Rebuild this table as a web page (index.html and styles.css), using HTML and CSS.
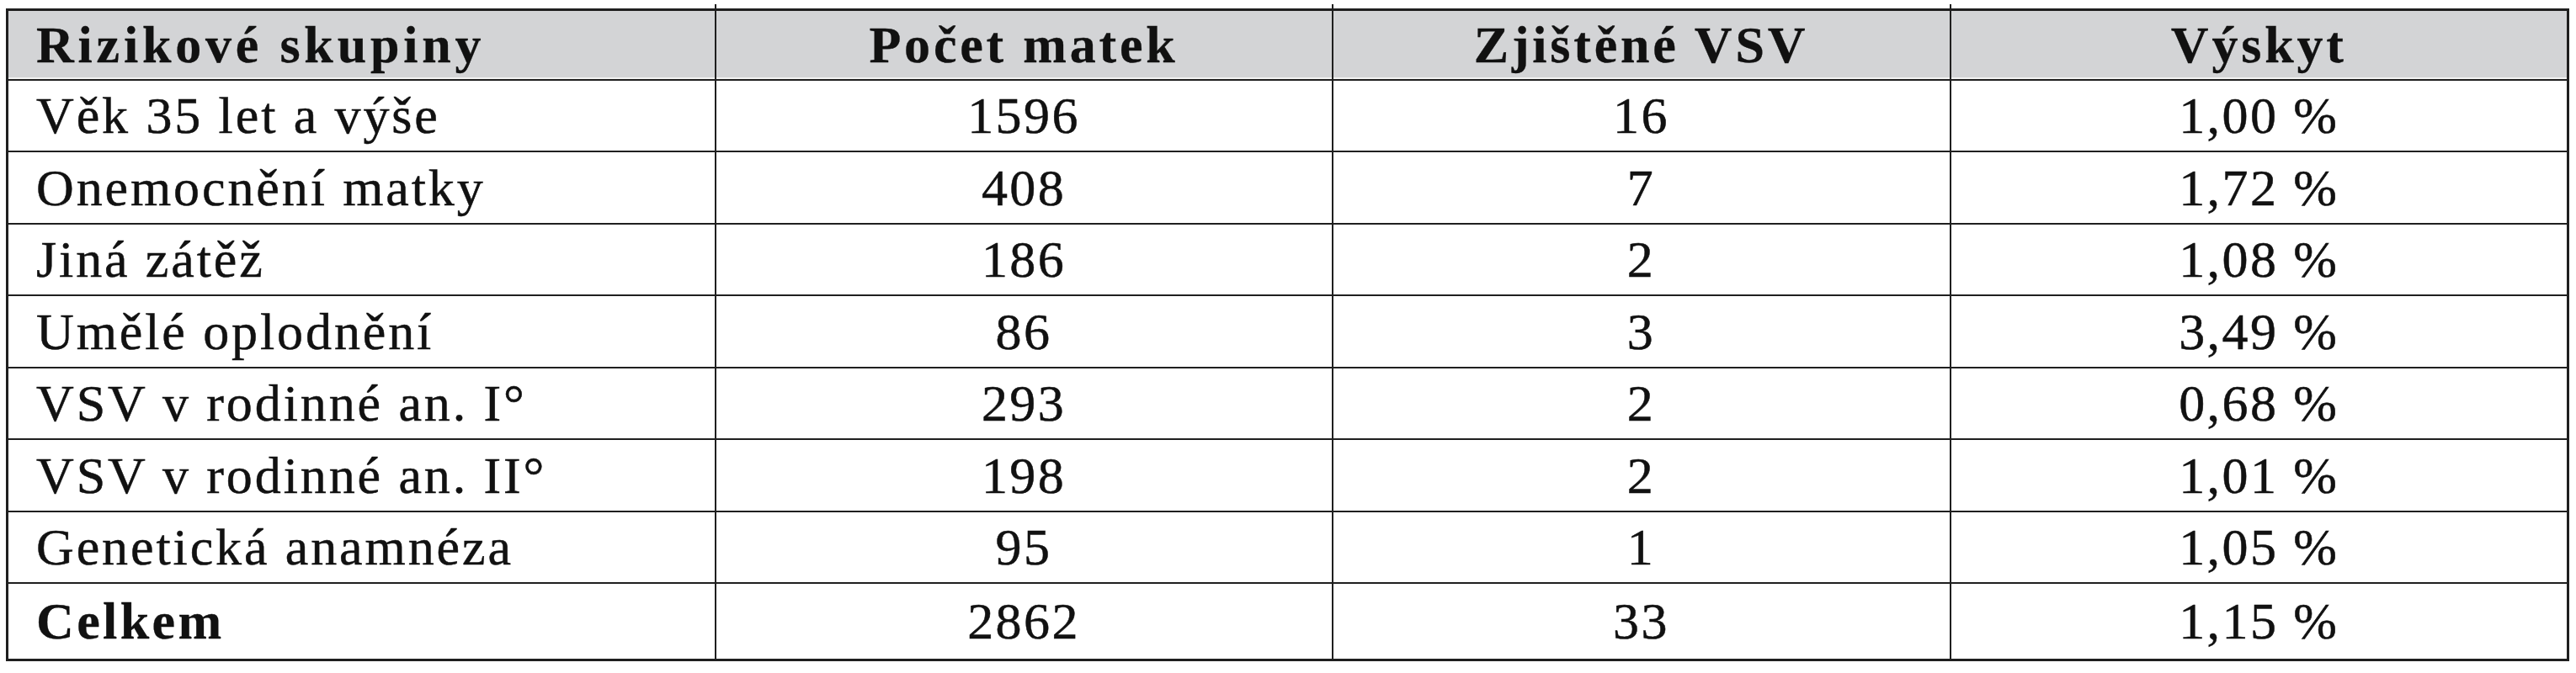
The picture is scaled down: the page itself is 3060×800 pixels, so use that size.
FILE: index.html
```html
<!DOCTYPE html>
<html lang="cs">
<head>
<meta charset="utf-8">
<title>Rizikové skupiny</title>
<link rel="stylesheet" href="styles.css">
</head>
<body>
<table class="risk-table">
  <colgroup>
    <col class="c1"><col class="c2"><col class="c3"><col class="c4">
  </colgroup>
  <thead>
    <tr class="head-row">
      <th class="label">Rizikové skupiny</th>
      <th class="tick">Počet matek</th>
      <th class="tick">Zjištěné VSV</th>
      <th class="tick">Výskyt</th>
    </tr>
  </thead>
  <tbody>
    <tr><td class="label">Věk 35 let a výše</td><td>1596</td><td>16</td><td>1,00 %</td></tr>
    <tr><td class="label">Onemocnění matky</td><td>408</td><td>7</td><td>1,72 %</td></tr>
    <tr><td class="label">Jiná zátěž</td><td>186</td><td>2</td><td>1,08 %</td></tr>
    <tr><td class="label">Umělé oplodnění</td><td>86</td><td>3</td><td>3,49 %</td></tr>
    <tr><td class="label">VSV v rodinné an. I°</td><td>293</td><td>2</td><td>0,68 %</td></tr>
    <tr><td class="label">VSV v rodinné an. II°</td><td>198</td><td>2</td><td>1,01 %</td></tr>
    <tr><td class="label">Genetická anamnéza</td><td>95</td><td>1</td><td>1,05 %</td></tr>
    <tr class="total-row"><td class="label total">Celkem</td><td>2862</td><td>33</td><td>1,15 %</td></tr>
  </tbody>
</table>
</body>
</html>
```

FILE: styles.css
```css
html, body {
  margin: 0;
  padding: 0;
  background: #ffffff;
}

body {
  padding: 10px 0 0 7px;
  font-family: "Liberation Serif", "DejaVu Serif", serif;
  color: #111111;
}

.risk-table {
  border-collapse: collapse;
  table-layout: fixed;
  width: 3042px;
  border: 3px solid #1f1f1f;
  font-family: "Liberation Serif", "DejaVu Serif", serif;
  font-size: 62px;
  letter-spacing: 2.4px;
}

.c1 { width: 841px; }
.c2 { width: 733px; }
.c3 { width: 734px; }
.c4 { width: 734px; }

.risk-table th,
.risk-table td {
  border: 2px solid #1f1f1f;
  padding: 0;
  text-align: center;
  vertical-align: middle;
  line-height: 1.1;
  white-space: nowrap;
  font-family: "Liberation Serif", "DejaVu Serif", serif;
  -webkit-text-stroke: 0.5px #111111;
}

.risk-table th {
  background: #d3d4d6;
  font-weight: bold;
  letter-spacing: 3.8px;
  box-shadow: inset 0 -2px 0 #f2f2f2;
  -webkit-text-stroke: 0.3px #111111;
}

.risk-table th.tick {
  position: relative;
}

.risk-table th.tick::before {
  content: "";
  position: absolute;
  top: -8px;
  left: -2px;
  width: 2px;
  height: 6px;
  background: #1f1f1f;
}

.head-row { height: 83px; }
.risk-table tbody tr { height: 85.5px; }
.risk-table tbody tr.total-row { height: 91px; }

.risk-table .label {
  text-align: left;
  padding-left: 33px;
  letter-spacing: 2.9px;
}

.risk-table th.label {
  letter-spacing: 4.8px;
}

.risk-table .total {
  font-weight: bold;
  letter-spacing: 3.4px;
  -webkit-text-stroke: 0.3px #111111;
}
```
